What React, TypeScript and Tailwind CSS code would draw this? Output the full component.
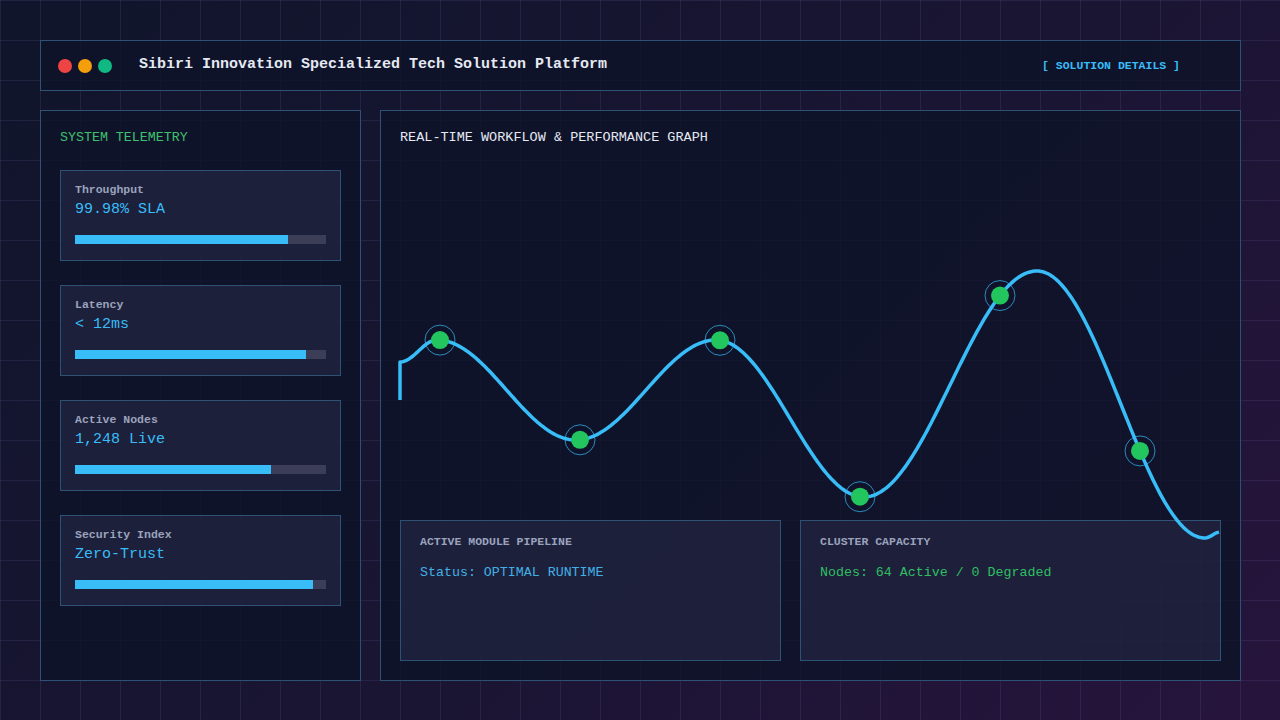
import React from 'react'

const mono = { fontFamily: '"Liberation Mono", "DejaVu Sans Mono", monospace' }

interface Metric {
  label: string
  value: string
  pct: number
}

const metrics: Metric[] = [
  { label: 'Throughput', value: '99.98% SLA', pct: 85 },
  { label: 'Latency', value: '< 12ms', pct: 92 },
  { label: 'Active Nodes', value: '1,248 Live', pct: 78 },
  { label: 'Security Index', value: 'Zero-Trust', pct: 95 },
]

// extrema of the wave, in chart-panel coordinates
const extrema: [number, number][] = [
  [20, 252],
  [57, 230],
  [196, 330],
  [336, 230],
  [484, 387],
  [657, 161],
  [825, 428],
  [840, 422],
]

function waveY(x: number) {
  for (let i = 0; i < extrema.length - 1; i++) {
    const [x0, y0] = extrema[i]
    const [x1, y1] = extrema[i + 1]
    if (x >= x0 && x <= x1) {
      const t = (x - x0) / (x1 - x0)
      return y0 + ((y1 - y0) * (1 - Math.cos(Math.PI * t))) / 2
    }
  }
  return extrema[extrema.length - 1][1]
}

function buildPath() {
  let d = 'M20 290 L20 252'
  for (let x = 21; x <= 840; x += 2) {
    d += ` L${x} ${waveY(x).toFixed(1)}`
  }
  return d
}

const dotXs = [60, 200, 340, 480, 620, 760]

function MetricCard({ label, value, pct }: Metric) {
  return (
    <div className="h-[91px] w-[281px] border border-[#2d5275] bg-[rgba(42,44,72,0.55)] px-[14px] pt-[13px]">
      <div className="text-[11.5px] leading-[12px] font-bold text-[#9aa3bd]">{label}</div>
      <div className="mt-[5px] text-[15px] leading-[18px] text-[#38bdf8]">{value}</div>
      <div className="mt-[16px] h-[9px] w-full bg-[#3b3e56]">
        <div className="h-full bg-[#38bdf8]" style={{ width: `${pct}%` }} />
      </div>
    </div>
  )
}

export default function App() {
  const path = buildPath()

  return (
    <div
      style={mono}
      className="w-[1280px] h-[720px] overflow-hidden bg-[linear-gradient(135deg,#10152b_0%,#1a1533_55%,#27143c_100%)]"
    >
      <div className="w-full h-full pt-10 pl-10 bg-[linear-gradient(rgba(130,120,190,0.14)_1px,transparent_1px),linear-gradient(90deg,rgba(130,120,190,0.14)_1px,transparent_1px)] bg-[size:40px_40px]">
        {/* Header */}
        <div className="w-[1201px] h-[51px] flex items-center border border-[#2d5275] bg-[rgba(14,20,40,0.82)] pl-[17px] pr-[60px]">
          <div className="flex items-center gap-[6px]">
            <span className="w-[14px] h-[14px] rounded-full bg-[#ef4444]" />
            <span className="w-[14px] h-[14px] rounded-full bg-[#f59e0b]" />
            <span className="w-[14px] h-[14px] rounded-full bg-[#10b981]" />
          </div>
          <div className="ml-[27px] text-[15px] font-bold text-[#e5e9f2]">
            Sibiri Innovation Specialized Tech Solution Platform
          </div>
          <div className="ml-auto text-[11.5px] font-bold text-[#38bdf8]">[ SOLUTION DETAILS ]</div>
        </div>

        {/* Main */}
        <div className="mt-[19px] flex gap-[19px] w-[1201px] h-[571px]">
          {/* Telemetry */}
          <div className="w-[321px] border border-[#2d5275] bg-[rgba(14,20,40,0.82)] p-[19px]">
            <div className="text-[13.3px] leading-4 text-[#3fc06d]">SYSTEM TELEMETRY</div>
            <div className="mt-6 flex flex-col gap-[24px]">
              {metrics.map((m) => (
                <MetricCard key={m.label} {...m} />
              ))}
            </div>
          </div>

          {/* Graph */}
          <div className="relative w-[861px] flex flex-col border border-[#2d5275] bg-[rgba(14,20,40,0.82)] p-[19px]">
            <div className="text-[13.5px] leading-4 text-[#e5e9f2]">REAL-TIME WORKFLOW &amp; PERFORMANCE GRAPH</div>
            <div className="mt-auto flex gap-[19px] h-[141px]">
              <div className="w-[381px] border border-[#2d5275] bg-[rgba(42,44,72,0.55)] px-[19px] pt-[15px]">
                <div className="text-[11.5px] leading-[12px] font-bold text-[#9aa3bd]">ACTIVE MODULE PIPELINE</div>
                <div className="mt-[17px] text-[13.3px] leading-4 text-[#42b0e6]">Status: OPTIMAL RUNTIME</div>
              </div>
              <div className="w-[421px] border border-[#2d5275] bg-[rgba(42,44,72,0.55)] px-[19px] pt-[15px]">
                <div className="text-[11.5px] leading-[12px] font-bold text-[#9aa3bd]">CLUSTER CAPACITY</div>
                <div className="mt-[17px] text-[13.3px] leading-4 text-[#2fbf62]">Nodes: 64 Active / 0 Degraded</div>
              </div>
            </div>

            <svg
              className="absolute top-[-1px] left-[-1px] pointer-events-none"
              width={861}
              height={571}
              viewBox="0 0 861 571"
            >
              <path d={path} fill="none" stroke="#38bdf8" strokeWidth={3.5} strokeLinejoin="round" />
              {dotXs.map((x) => {
                const y = waveY(x)
                return (
                  <g key={x}>
                    <circle cx={x} cy={y} r={15} fill="none" stroke="#38bdf8" strokeOpacity={0.7} strokeWidth={1} />
                    <circle cx={x} cy={y} r={9} fill="#22c55e" />
                  </g>
                )
              })}
            </svg>
          </div>
        </div>
      </div>
    </div>
  )
}
